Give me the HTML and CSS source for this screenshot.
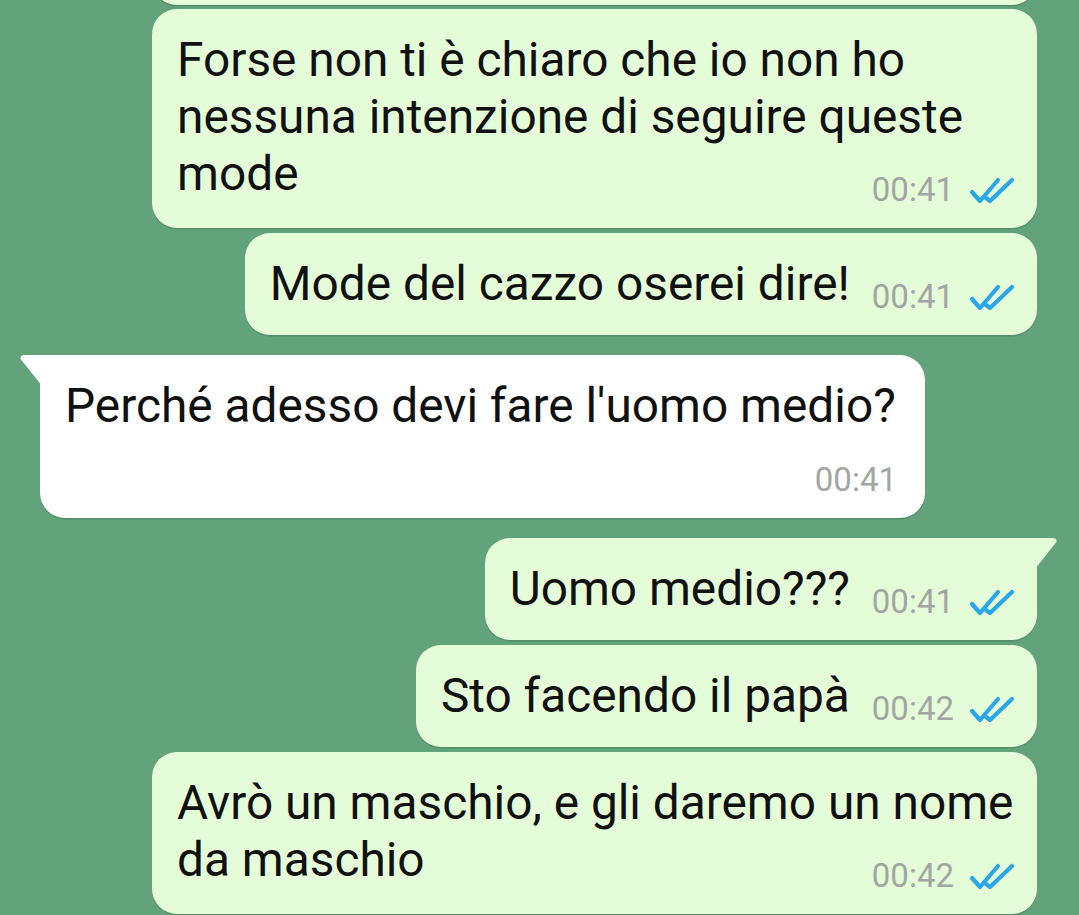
FILE: index.html
```html
<!DOCTYPE html>
<html lang="it">
<head>
  <meta charset="UTF-8" />
  <meta name="viewport" content="width=device-width, initial-scale=1.0"/>
  <title>Chat</title>
  <link rel="stylesheet" href="styles.css">
</head>
<body>
  <main class="chat">
    <div class="msg out cut"></div>

    <div class="msg out multi">
      <span class="text">Forse non ti è chiaro che io non ho nessuna intenzione di seguire queste mode</span>
      <span class="meta"><span class="time">00:41</span><svg class="ticks" viewBox="0 0 46 27"><path d="M3 15 L11 24 L29 3"/><path d="M17 21 L21 24 L43 3"/></svg></span>
    </div>

    <div class="msg out">
      <span class="text">Mode del cazzo oserei dire!</span>
      <span class="meta"><span class="time">00:41</span><svg class="ticks" viewBox="0 0 46 27"><path d="M3 15 L11 24 L29 3"/><path d="M17 21 L21 24 L43 3"/></svg></span>
    </div>

    <div class="msg in tail group">
      <span class="text">Perché adesso devi fare l'uomo medio?</span>
      <span class="meta"><span class="time">00:41</span></span>
    </div>

    <div class="msg out tail group">
      <span class="text">Uomo medio???</span>
      <span class="meta"><span class="time">00:41</span><svg class="ticks" viewBox="0 0 46 27"><path d="M3 15 L11 24 L29 3"/><path d="M17 21 L21 24 L43 3"/></svg></span>
    </div>

    <div class="msg out">
      <span class="text">Sto facendo il papà</span>
      <span class="meta"><span class="time">00:42</span><svg class="ticks" viewBox="0 0 46 27"><path d="M3 15 L11 24 L29 3"/><path d="M17 21 L21 24 L43 3"/></svg></span>
    </div>

    <div class="msg out multi">
      <span class="text">Avrò un maschio, e gli daremo un nome da maschio</span>
      <span class="meta"><span class="time">00:42</span><svg class="ticks" viewBox="0 0 46 27"><path d="M3 15 L11 24 L29 3"/><path d="M17 21 L21 24 L43 3"/></svg></span>
    </div>
  </main>
</body>
</html>
```

FILE: styles.css
```css
:root {
  --chat-bg: #62a37c;
  --out-bg: #e4fcd8;
  --in-bg: #ffffff;
  --text: #111111;
  --time: #a2a6a2;
  --tick: #2ba7e8;
}

* {
  margin: 0;
  padding: 0;
  box-sizing: border-box;
}

body {
  font-family: Roboto, 'Noto Sans', sans-serif;
  background: var(--chat-bg);
  color: var(--text);
  height: 915px;
  overflow: hidden;
}

.chat {
  display: flex;
  flex-direction: column;
  gap: 5px;
  padding: 0 42px 0 40px;
}

.msg {
  position: relative;
  display: flow-root;
  max-width: 885px;
  padding: 23px 20px 20px 25px;
  border-radius: 25px;
  font-size: 47.8px;
  line-height: 57px;
  box-shadow: 0 1.5px 0.5px rgba(0, 0, 0, 0.14);
}

.msg.out {
  align-self: flex-end;
  background: var(--out-bg);
}

.msg.in {
  align-self: flex-start;
  background: var(--in-bg);
}

.msg.group {
  margin-top: 15px;
}

.msg.cut {
  width: 885px;
  height: 60px;
  margin-top: -55px;
  margin-bottom: -1px;
}

.meta {
  float: right;
  display: inline-flex;
  align-items: center;
  gap: 15px;
  margin: 23px 2px 0 22px;
  height: 36px;
}

.msg.multi .meta {
  margin-top: 26px;
}

.msg.in .meta {
  margin: 27px 8px 0 22px;
}

.time {
  font-size: 33px;
  line-height: 36px;
  color: var(--time);
}

.ticks {
  width: 46px;
  height: 27px;
  fill: none;
  stroke: var(--tick);
  stroke-width: 4.2;
  stroke-linecap: round;
  stroke-linejoin: round;
}

/* bubble tails */
.msg.tail.in {
  border-top-left-radius: 0;
}

.msg.tail.out {
  border-top-right-radius: 0;
}

.msg.tail::before {
  content: "";
  position: absolute;
  top: 0;
  width: 22px;
  height: 31px;
  background: inherit;
}

.msg.tail.in::before {
  left: -20px;
  clip-path: polygon(12% 0, 100% 0, 100% 100%, 2% 12%, 3% 3%);
  border-top-left-radius: 4px;
}

.msg.tail.out::before {
  right: -20px;
  clip-path: polygon(0 0, 88% 0, 97% 3%, 98% 12%, 0 100%);
  border-top-right-radius: 4px;
}
```
